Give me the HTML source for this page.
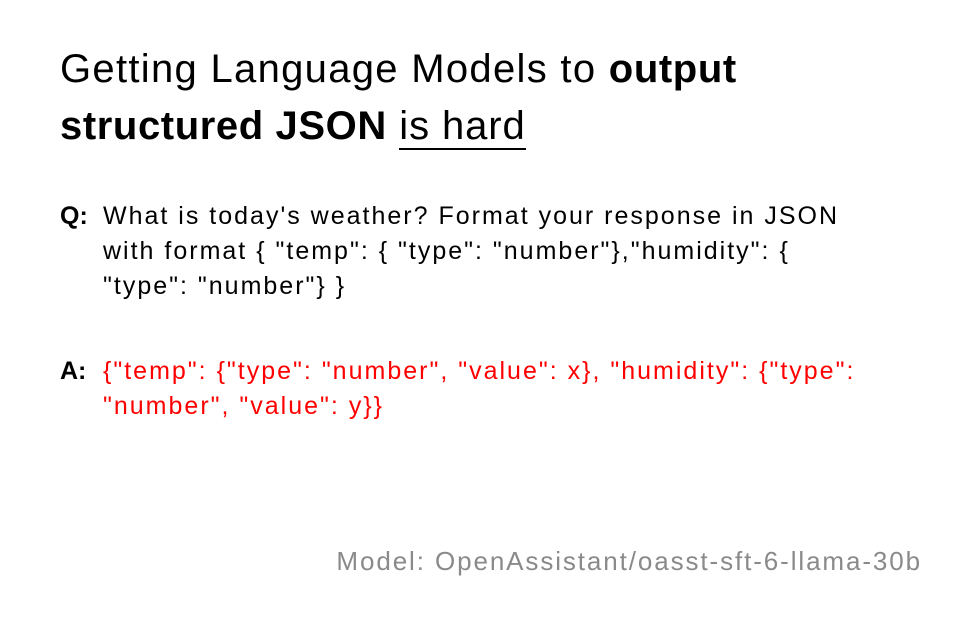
<!DOCTYPE html>
<html><head><style>
body{margin:0;width:960px;height:627px;background:#fff;font-family:"Liberation Sans",sans-serif;position:relative;overflow:hidden}
h1{position:absolute;left:60px;top:41px;margin:0;font-weight:normal;font-size:40px;line-height:57px;color:#000;letter-spacing:1.3px;white-space:nowrap}
h1 b{letter-spacing:0.6px}
h1 u{text-decoration:none;border-bottom:2px solid #000;letter-spacing:0.9px}
.q,.a{position:absolute;left:60px;font-size:25px;line-height:35px;white-space:nowrap;letter-spacing:2px}
.q{top:199px}.a{top:354px;color:#f00}
.l{position:absolute;left:0;font-weight:bold;color:#000;letter-spacing:0}
.t{margin-left:43px}
.m{position:absolute;right:38px;top:546px;font-size:26px;color:#8a8a8a;letter-spacing:1.9px;white-space:nowrap}
</style></head><body>
<h1>Getting Language Models to <b>output</b><br><b>structured JSON</b> <u>is hard</u></h1>
<div class="q"><span class="l">Q:</span><div class="t">What is today's weather? Format your response in JSON<br>with format { "temp": { "type": "number"},"humidity": {<br>"type": "number"} }</div></div>
<div class="a"><span class="l">A:</span><div class="t">{"temp": {"type": "number", "value": x}, "humidity": {"type":<br>"number", "value": y}}</div></div>
<div class="m">Model: OpenAssistant/oasst-sft-6-llama-30b</div>
</body></html>
